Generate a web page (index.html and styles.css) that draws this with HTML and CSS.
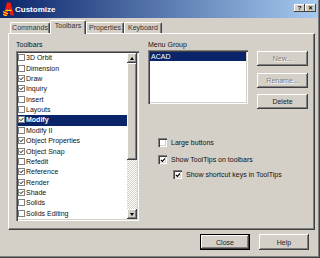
FILE: index.html
```html
<!DOCTYPE html>
<html lang="en">
<head>
    <meta charset="UTF-8">
    <title>Customize</title>
    <link rel="stylesheet" href="styles.css">
</head>
<body>
    <div class="window">
        <div class="titlebar">
            <svg class="app-icon" viewBox="0 0 11 14">
                <path d="M4 0.5h3.5l3.5 13H7.6L5.8 6 3.8 13.5H0.5z" fill="#f01a10"/>
                <path d="M0 9.5l5 2.5M0 12.3l4 1.7M2.5 8.3h6" stroke="#ffd800" stroke-width="1.3" fill="none"/>
            </svg>
            <span class="title">Customize</span>
            <div class="caption">
                <span class="cap-btn">?</span>
                <span class="cap-btn">&#x2715;</span>
            </div>
        </div>

        <div class="tabs">
            <span class="tab w40">Commands</span>
            <span class="tab active w36">Toolbars</span>
            <span class="tab w38">Properties</span>
            <span class="tab w38">Keyboard</span>
        </div>

        <div class="panel">
            <div class="col-left">
                <div class="label">Toolbars</div>
                <div class="listbox toolbars">
                    <ul class="items">
                        <li><span class="cb"></span>3D Orbit</li>
                        <li><span class="cb"></span>Dimension</li>
                        <li><span class="cb on"></span>Draw</li>
                        <li><span class="cb on"></span>Inquiry</li>
                        <li><span class="cb"></span>Insert</li>
                        <li><span class="cb"></span>Layouts</li>
                        <li class="selected"><span class="cb on"></span>Modify</li>
                        <li><span class="cb"></span>Modify II</li>
                        <li><span class="cb on"></span>Object Properties</li>
                        <li><span class="cb on"></span>Object Snap</li>
                        <li><span class="cb"></span>Refedit</li>
                        <li><span class="cb on"></span>Reference</li>
                        <li><span class="cb on"></span>Render</li>
                        <li><span class="cb on"></span>Shade</li>
                        <li><span class="cb"></span>Solids</li>
                        <li><span class="cb"></span>Solids Editing</li>
                    </ul>
                    <div class="scrollbar">
                        <span class="sb-btn up"></span>
                        <span class="thumb"></span>
                        <span class="track"></span>
                        <span class="sb-btn down"></span>
                    </div>
                </div>
            </div>

            <div class="col-right">
                <div class="label short">Menu Group</div>
                <div class="group-row">
                    <div class="listbox menu">
                        <div class="row selected">ACAD</div>
                    </div>
                    <div class="btn-stack">
                        <button disabled>New...</button>
                        <button disabled>Rename...</button>
                        <button>Delete</button>
                    </div>
                </div>
                <div class="options">
                    <label class="opt"><span class="box"></span>Large buttons</label>
                    <label class="opt"><span class="box on"></span>Show ToolTips on toolbars</label>
                    <label class="opt sub"><span class="box on"></span>Show shortcut keys in ToolTips</label>
                </div>
            </div>
        </div>

        <div class="footer">
            <button class="default">Close</button>
            <button>Help</button>
        </div>
    </div>
</body>
</html>
```
FILE: styles.css
```css
* {
    box-sizing: border-box;
}
html,
body {
    margin: 0;
}
body {
    width: 320px;
    height: 258px;
    overflow: hidden;
    background: #d4d0c8;
    font-family: "Liberation Sans", Arial, sans-serif;
    font-size: 7px;
    color: #111;
}

.window {
    width: 320px;
    height: 258px;
    display: flex;
    flex-direction: column;
    border-right: 1px solid #404040;
    border-bottom: 1px solid #404040;
    box-shadow: inset -1px -1px #808080;
}

/* title bar */
.titlebar {
    flex: none;
    height: 18px;
    margin-right: 1px;
    display: flex;
    align-items: center;
    padding-left: 3px;
    background: linear-gradient(to right, #0a246a, #a6caf0);
    color: #fff;
}
.app-icon {
    width: 11px;
    height: 14px;
    flex: none;
}
.title {
    font-weight: bold;
    font-size: 8px;
    margin-left: 1px;
}
.caption {
    margin-left: auto;
    margin-right: 2px;
    align-self: flex-start;
    margin-top: 4px;
    display: flex;
}
.cap-btn {
    width: 11px;
    height: 8px;
    background: #d4d0c8;
    box-shadow: inset -1px -1px #404040, inset 1px 1px #fff;
    color: #000;
    font-size: 6px;
    font-weight: bold;
    line-height: 8px;
    text-align: center;
}

/* tabs */
.tabs {
    flex: none;
    height: 15px;
    display: flex;
    align-items: flex-end;
    padding-left: 10px;
}
.tab {
    height: 11px;
    border: 1px solid;
    border-color: #fff #404040 transparent #fff;
    border-bottom: none;
    border-radius: 2px 2px 0 0;
    box-shadow: inset -1px 0 #808080;
    line-height: 10px;
    text-align: center;
    white-space: nowrap;
    color: #333;
}
.tab.active {
    height: 14px;
    margin-bottom: -1px;
    line-height: 9px;
    padding-bottom: 4px;
    background: #d4d0c8;
    position: relative;
    z-index: 1;
}
.w36 { width: 36px; }
.w38 { width: 38px; }
.w40 { width: 40px; }

/* panel */
.panel {
    flex: none;
    height: 197px;
    margin: 0 4px 0 8px;
    border: 1px solid;
    border-color: #fff #404040 #404040 #fff;
    box-shadow: inset -1px -1px #808080;
    padding: 5px 0 0 7px;
    display: flex;
    gap: 9px;
}
.col-left {
    width: 123px;
}
.col-right {
    flex: 1;
}
.label {
    height: 12px;
    line-height: 11px;
}
.label.short {
    height: 11px;
}

.listbox {
    background: #fff;
    padding: 2px;
    box-shadow: inset 1px 1px #808080, inset 2px 2px #404040, inset -1px -1px #fff, inset -2px -2px #d4d0c8;
}
.toolbars {
    height: 170px;
    display: flex;
}
.items {
    list-style: none;
    margin: 0;
    padding: 0;
    flex: 1;
}
.items li {
    height: 10.375px;
    display: flex;
    align-items: center;
    gap: 1px;
    white-space: nowrap;
    padding-bottom: 1px;
}
.items li.selected {
    background: #0a246a;
    color: #fff;
    font-weight: bold;
}
.cb {
    flex: none;
    width: 7px;
    height: 7px;
    border: 1px solid #808080;
    background: #fff;
}
.cb.on,
.box.on {
    background: #fff url("data:image/svg+xml,%3Csvg xmlns='http://www.w3.org/2000/svg' viewBox='0 0 7 7'%3E%3Cpath d='M1 3.3l1.8 1.8L6 1.6' fill='none' stroke='%23000' stroke-width='1.4'/%3E%3C/svg%3E") center / 100% no-repeat;
}

.scrollbar {
    flex: none;
    width: 10px;
    display: flex;
    flex-direction: column;
}
.sb-btn,
.thumb {
    flex: none;
    background: #d4d0c8;
    box-shadow: inset -1px -1px #404040, inset 1px 1px #fff, inset -2px -2px #808080;
}
.sb-btn {
    height: 10px;
    display: flex;
    align-items: center;
    justify-content: center;
}
.sb-btn::after {
    content: "";
    border-left: 2.5px solid transparent;
    border-right: 2.5px solid transparent;
}
.sb-btn.up::after {
    border-bottom: 3px solid #000;
}
.sb-btn.down::after {
    border-top: 3px solid #000;
}
.thumb {
    height: 97px;
}
.track {
    flex: 1;
    background: repeating-conic-gradient(#fff 0 25%, #d4d0c8 0 50%) 0 0 / 2px 2px;
}

.group-row {
    display: flex;
    gap: 9px;
}
.menu {
    width: 100px;
    height: 54px;
}
.menu .row {
    height: 9px;
    line-height: 9px;
    padding-left: 1px;
}
.menu .row.selected {
    background: #0a246a;
    color: #fff;
}

button {
    font: inherit;
    color: #222;
    background: #d4d0c8;
    border: none;
    padding: 0;
    box-shadow: inset -1px -1px #404040, inset 1px 1px #fff, inset -2px -2px #808080;
}
button:disabled {
    color: #808080;
    text-shadow: 1px 1px #fff;
}
.btn-stack {
    display: flex;
    flex-direction: column;
    gap: 6.5px;
    padding-top: 1px;
}
.btn-stack button {
    width: 51px;
    height: 15px;
}

.options {
    margin: 29px 0 0 10px;
    display: flex;
    flex-direction: column;
}
.opt {
    height: 9px;
    display: flex;
    align-items: center;
    gap: 4px;
    white-space: nowrap;
}
.opt + .opt {
    margin-top: 8px;
}
.opt.sub {
    margin-top: 6px;
    margin-left: 15px;
}
.box {
    flex: none;
    width: 9px;
    height: 9px;
    background: #fff;
    box-shadow: inset 1px 1px #808080, inset 2px 2px #404040, inset -1px -1px #fff, inset -2px -2px #d4d0c8;
}
.box.on {
    background-size: 6px 6px;
}

.footer {
    display: flex;
    justify-content: flex-end;
    gap: 9px;
    padding: 4px 10px 0 0;
}
.footer button {
    width: 50px;
    height: 16px;
}
.footer button.default {
    border: 1px solid #000;
}
```
